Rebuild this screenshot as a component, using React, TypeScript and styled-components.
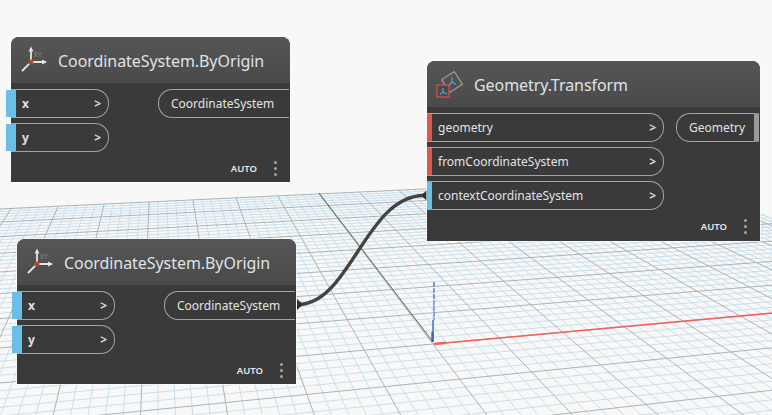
import React from "react";
import styled, { createGlobalStyle } from "styled-components";

const Global = createGlobalStyle`
  html, body { margin: 0; padding: 0; background: #f8f8f8; }
  #root { width: 772px; height: 415px; }
`;

const Canvas = styled.div`
  position: relative;
  width: 772px;
  height: 415px;
  overflow: hidden;
  background: #f8f8f8;
  font-family: "Noto Sans", "Open Sans", sans-serif;
`;

const Scene = styled.svg`
  position: absolute;
  inset: 0;
`;

const NodeCard = styled.div<{ $x: number; $y: number; $w: number; $h: number }>`
  position: absolute;
  left: ${(p) => p.$x}px;
  top: ${(p) => p.$y}px;
  width: ${(p) => p.$w}px;
  height: ${(p) => p.$h}px;
  display: flex;
  flex-direction: column;
  background: #3a3a3a;
  border-radius: 8px 8px 0 0;
  box-shadow: 0 0 0 1px rgba(255, 255, 255, 0.55);
`;

const Header = styled.div`
  height: 46px;
  flex: none;
  display: flex;
  align-items: center;
  gap: 11px;
  padding-left: 8px;
  box-sizing: border-box;
  border-radius: 8px 8px 0 0;
  background: linear-gradient(#565656, #4a4a4a);
`;

const Title = styled.span`
  font-size: 16px;
  letter-spacing: -0.06px;
  color: #dfe3e6;
  white-space: nowrap;
  position: relative;
  top: 1px;
`;

const Ports = styled.div`
  display: flex;
  justify-content: space-between;
  align-items: flex-start;
  padding-top: 6px;
`;

const PortColumn = styled.div`
  display: flex;
  flex-direction: column;
  gap: 5px;
`;

const InputPill = styled.div<{ $w: number }>`
  position: relative;
  width: ${(p) => p.$w}px;
  height: 29px;
  box-sizing: border-box;
  display: flex;
  align-items: center;
  justify-content: space-between;
  padding: 0 7px 0 11px;
  border: 1px solid #a3a3a3;
  border-left: none;
  border-radius: 0 14px 14px 0;
  color: #e2e2e2;
  font-size: 12px;
`;

const Strip = styled.span<{ $color: string; $overhang: number }>`
  position: absolute;
  left: ${(p) => -p.$overhang}px;
  top: 0;
  bottom: 0;
  width: ${(p) => 5 + p.$overhang}px;
  background: ${(p) => p.$color};
`;

const PortLabel = styled.span<{ $strong: boolean }>`
  font-weight: ${(p) => (p.$strong ? 700 : 400)};
`;

const Chevron = styled.span`
  font-size: 12px;
  font-weight: 600;
`;

const OutputPill = styled.div<{ $w: number; $mr: number; $strip?: boolean }>`
  position: relative;
  width: ${(p) => p.$w}px;
  height: 29px;
  margin-right: ${(p) => p.$mr}px;
  box-sizing: border-box;
  display: flex;
  align-items: center;
  padding-left: 12px;
  border: 1px solid #a3a3a3;
  border-right: ${(p) => (p.$strip ? "5px solid #9a9a9a" : "none")};
  border-radius: 14px 0 0 14px;
  color: #e2e2e2;
  font-size: 12px;
  white-space: nowrap;
`;

const Footer = styled.div`
  flex: 1;
  display: flex;
  align-items: center;
  justify-content: flex-end;
  padding: 2px 13px 0 0;
  gap: 17px;
`;

const Auto = styled.span`
  font-size: 9.5px;
  font-weight: 600;
  color: #e8e8e8;
`;

const Dots = styled.span`
  display: flex;
  flex-direction: column;
  gap: 3px;
  i {
    display: block;
    width: 3px;
    height: 3px;
    border-radius: 50%;
    background: #a5a5a5;
  }
`;

/* projective grid */
const O = [433, 344];
const VU = [4070, 17];
const VV = [158, -18];
const STEP_U = 0.0185;
const STEP_V = 0.0885;
const project = (s: number, t: number) => {
  const w = 1 + s + t;
  return [(O[0] + s * VU[0] + t * VV[0]) / w, (O[1] + s * VU[1] + t * VV[1]) / w];
};
const U_MAX = 0.175;
const T_MAX = 0.708;
const U_MIN = -0.2;
const T_MIN = -0.45;

function gridLines() {
  const minor: string[] = [];
  const major: string[] = [];
  const seg = (a: number[], b: number[]) =>
    `M${a[0].toFixed(1)} ${a[1].toFixed(1)}L${b[0].toFixed(1)} ${b[1].toFixed(1)}`;
  for (let i = -60; i <= 60; i++) {
    const s = (i * STEP_U) / 5;
    if (s > U_MAX || s < U_MIN) continue;
    (i % 5 === 0 ? major : minor).push(seg(project(s, T_MAX), project(s, T_MIN)));
  }
  for (let j = -30; j <= 45; j++) {
    const t = (j * STEP_V) / 5;
    if (t > T_MAX + 0.001 || t < T_MIN) continue;
    (j % 5 === 0 ? major : minor).push(seg(project(U_MIN, t), project(U_MAX, t)));
  }
  return { minor: minor.join(""), major: major.join("") };
}

function Background() {
  const g = gridLines();
  return (
    <Scene width={772} height={415} viewBox="0 0 772 415">
      <path d={g.minor} stroke="#cbdfeb" strokeWidth={1} fill="none" />
      <path d={g.major} stroke="#aab3b8" strokeWidth={1} fill="none" />
      <path d="M433 342L319 193" stroke="#3f5a36" strokeWidth={0.9} fill="none" />
      <path d="M434 282V320" stroke="#3f63c4" strokeWidth={1.2} strokeDasharray="5 1" />
      <path d="M433.5 300V322" stroke="#8db4dc" strokeWidth={1.2} />
      <path d="M433 320V342" stroke="#3f63c4" strokeWidth={1.4} />
      <path d="M432.5 332V342" stroke="#3f63c4" strokeWidth={2.4} />
      <path d="M434 344L772 313" stroke="#f2605a" strokeWidth={1.4} />
      <path d="M434 344L446 342.8" stroke="#f2605a" strokeWidth={2.6} />
      <path d="M298 304.5C350 304.5 366 195.5 424 195.5" stroke="#434343" strokeWidth={3.4} fill="none" />
      <path d="M297 299L303 304.5L297 310Z" fill="#2f2f2f" />
      <path d="M427 190L421 195.5L427 201Z" fill="#2f2f2f" />
    </Scene>
  );
}

const ByOriginIcon = () => (
  <svg width="28" height="32" viewBox="0 0 28 32">
    <path d="M12 5V18M12 18H26M12 18L3.5 26.5" stroke="#e4e4e4" strokeWidth="1.8" fill="none" strokeLinecap="round" />
    <path d="M12 2.5L9.6 7.5H14.4ZM28 18L23 15.6V20.4Z" fill="#e4e4e4" />
    <rect x="9.6" y="15.6" width="4.8" height="4.8" fill="#b5482f" />
    <text x="14.5" y="13" fontSize="6.5" fontWeight="700" fill="#7c7672" fontFamily="Noto Sans, sans-serif">XY</text>
  </svg>
);

const TransformIcon = () => (
  <svg width="28" height="32" viewBox="0 0 28 32">
    <rect x="9.5" y="6.5" width="15" height="15" transform="rotate(-32 17 14)" fill="none" stroke="#9b9b9b" strokeWidth="1.3" />
    <path d="M17 9V14M17 14L21 16.5M17 14L14 17.5" stroke="#5b9bd5" strokeWidth="1.3" fill="none" />
    <rect x="2" y="17" width="12" height="12" fill="#4a4a4a" stroke="#d9553c" strokeWidth="1.2" />
    <path d="M8 20V24M8 24L12 26M8 24L5 26.5" stroke="#5b9bd5" strokeWidth="1.3" fill="none" />
  </svg>
);

const BLUE = "#69bfe6";
const RED = "#df5550";

type Input = { label: string; color: string };

function Node(props: {
  x: number; y: number; w: number; h: number; title: string; icon: React.ReactNode;
  inputs: Input[]; inputW: number; overhang: number;
  output: string; outW: number; outMr: number; outStrip?: boolean;
}) {
  return (
    <NodeCard $x={props.x} $y={props.y} $w={props.w} $h={props.h}>
      <Header>
        {props.icon}
        <Title>{props.title}</Title>
      </Header>
      <Ports>
        <PortColumn>
          {props.inputs.map((i) => (
            <InputPill key={i.label} $w={props.inputW}>
              <Strip $color={i.color} $overhang={props.overhang} />
              <PortLabel $strong={i.label.length === 1}>{i.label}</PortLabel>
              <Chevron>&gt;</Chevron>
            </InputPill>
          ))}
        </PortColumn>
        <OutputPill $w={props.outW} $mr={props.outMr} $strip={props.outStrip}>{props.output}</OutputPill>
      </Ports>
      <Footer>
        <Auto>AUTO</Auto>
        <Dots><i /><i /><i /></Dots>
      </Footer>
    </NodeCard>
  );
}

const xy: Input[] = [{ label: "x", color: BLUE }, { label: "y", color: BLUE }];

export default function App() {
  return (
    <Canvas>
      <Global />
      <Background />
      <Node x={11} y={37} w={279} h={145} title="CoordinateSystem.ByOrigin" icon={<ByOriginIcon />}
        inputs={xy} inputW={98} overhang={5} output="CoordinateSystem" outW={131} outMr={1} />
      <Node x={17} y={239} w={279} h={145} title="CoordinateSystem.ByOrigin" icon={<ByOriginIcon />}
        inputs={xy} inputW={98} overhang={5} output="CoordinateSystem" outW={131} outMr={1} />
      <Node x={427} y={61} w={333} h={180} title="Geometry.Transform" icon={<TransformIcon />}
        inputs={[
          { label: "geometry", color: RED },
          { label: "fromCoordinateSystem", color: RED },
          { label: "contextCoordinateSystem", color: BLUE },
        ]}
        inputW={237} overhang={0} output="Geometry" outW={83} outMr={1} outStrip />
    </Canvas>
  );
}
